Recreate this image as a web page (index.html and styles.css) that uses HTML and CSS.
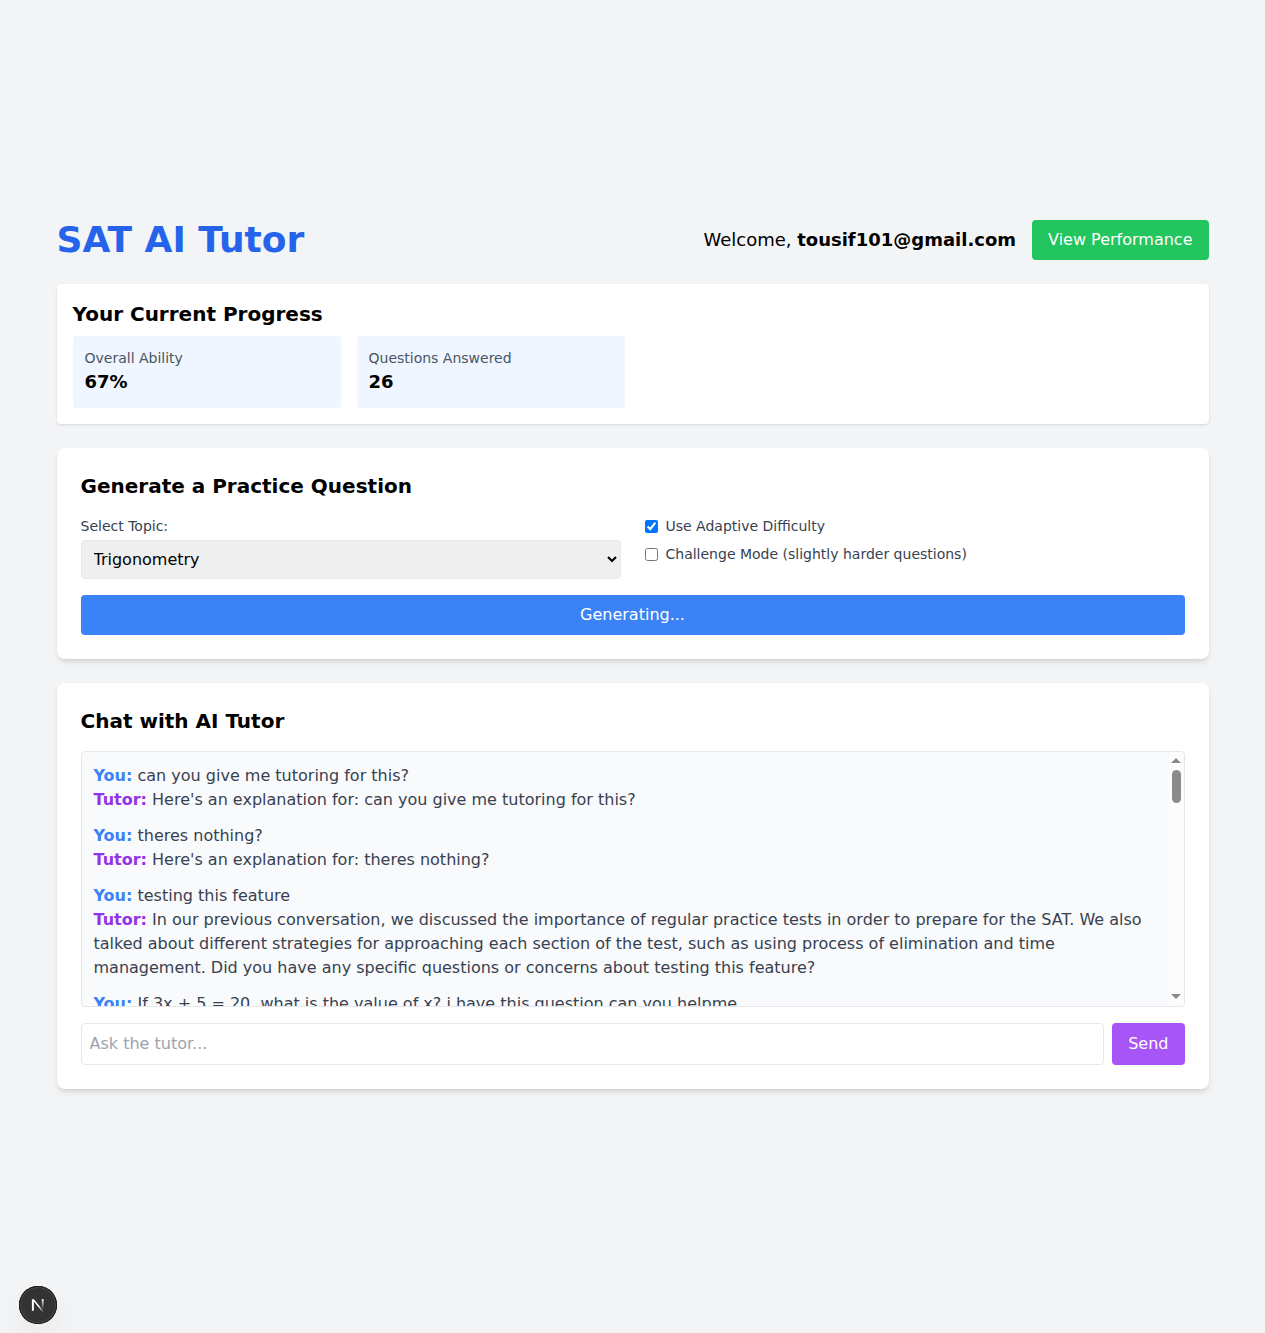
FILE: index.html
```html
<!DOCTYPE html>
<html lang="en">
<head>
<meta charset="utf-8">
<title>SAT AI Tutor</title>
<link rel="stylesheet" href="styles.css">
</head>
<body>
<main class="container">
  <header class="header">
    <h1 class="brand">SAT AI Tutor</h1>
    <div class="account">
      <span class="welcome">Welcome, <strong>tousif101@gmail.com</strong></span>
      <button class="btn btn-green">View Performance</button>
    </div>
  </header>

  <section class="progress">
    <h2 class="section-title">Your Current Progress</h2>
    <div class="stats">
      <div class="stat"><p class="stat-label">Overall Ability</p><p class="stat-value">67%</p></div>
      <div class="stat"><p class="stat-label">Questions Answered</p><p class="stat-value">26</p></div>
    </div>
  </section>

  <section class="card">
    <h2 class="section-title">Generate a Practice Question</h2>
    <div class="form-grid">
      <div>
        <label class="label" for="topic">Select Topic:</label>
        <select class="topic" id="topic"><option>Trigonometry</option></select>
      </div>
      <div class="options">
        <label class="option"><input type="checkbox" checked><span>Use Adaptive Difficulty</span></label>
        <label class="option"><input type="checkbox"><span>Challenge Mode (slightly harder questions)</span></label>
      </div>
    </div>
    <button class="btn btn-blue">Generating...</button>
  </section>

  <section class="card">
    <h2 class="section-title">Chat with AI Tutor</h2>
    <div class="chat">
      <div class="messages">
        <div class="exchange">
          <p><strong class="you">You:</strong> can you give me tutoring for this?</p>
          <p><strong class="tutor">Tutor:</strong> Here's an explanation for: can you give me tutoring for this?</p>
        </div>
        <div class="exchange">
          <p><strong class="you">You:</strong> theres nothing?</p>
          <p><strong class="tutor">Tutor:</strong> Here's an explanation for: theres nothing?</p>
        </div>
        <div class="exchange">
          <p><strong class="you">You:</strong> testing this feature</p>
          <p><strong class="tutor">Tutor:</strong> In our previous conversation, we discussed the importance of regular practice tests in order to prepare for the SAT. We also talked about different strategies for approaching each section of the test, such as using process of elimination and time management. Did you have any specific questions or concerns about testing this feature?</p>
        </div>
        <div class="exchange">
          <p><strong class="you">You:</strong> If 3x + 5 = 20, what is the value of x? i have this question can you helpme</p>
        </div>
      </div>
      <div class="scrollbar">
        <svg width="10" height="5" viewBox="0 0 10 5"><path d="M0 5 5 0 10 5Z" fill="#8b8b8b"/></svg>
        <div class="thumb"></div>
        <svg class="arrow-down" width="10" height="5" viewBox="0 0 10 5"><path d="M0 0h10L5 5Z" fill="#8b8b8b"/></svg>
      </div>
    </div>
    <div class="composer">
      <input class="ask" type="text" placeholder="Ask the tutor...">
      <button class="btn btn-purple">Send</button>
    </div>
  </section>
</main>

<div class="dev-badge">
  <svg width="38" height="38" viewBox="0 0 38 38" fill="none">
    <defs>
      <linearGradient id="stem" x1="0" y1="13" x2="0" y2="23" gradientUnits="userSpaceOnUse"><stop offset="0" stop-color="#fff"/><stop offset="1" stop-color="#fff" stop-opacity="0"/></linearGradient>
      <linearGradient id="diagonal" x1="19.500" y1="20" x2="24" y2="26" gradientUnits="userSpaceOnUse"><stop offset="0" stop-color="#fff"/><stop offset="1" stop-color="#fff" stop-opacity=".1"/></linearGradient>
    </defs>
    <path d="M12.900 24.700V13.200h2L24.700 25.200 23.400 26.200 14.900 15.600v9.100Z" fill="url(#diagonal)"/>
    <path d="M23.700 13v11" stroke="url(#stem)" stroke-width="1.800"/>
  </svg>
</div>
</body>
</html>
```

FILE: styles.css
```css
*, *::before, *::after { box-sizing: border-box; }
h1, h2, p { margin: 0; }
body {
  margin: 0;
  min-height: 100vh;
  display: flex;
  align-items: center;
  justify-content: center;
  background: #f3f4f6;
  color: #000;
  font: 16px/24px "DejaVu Sans", sans-serif;
}
button, input, select { font: inherit; margin: 0; }
.container { width: 1152px; }
.header {
  display: flex;
  align-items: center;
  justify-content: space-between;
  margin-bottom: 24px;
}
.brand { font-size: 36px; line-height: 40px; color: #2563eb; }
.account { display: flex; align-items: center; gap: 16px; }
.welcome { font-size: 18px; line-height: 28px; }
.btn {
  border: 0;
  border-radius: 4px;
  padding: 8px 16px;
  color: #fff;
}
.btn-green { background: #22c55e; }
.btn-blue { display: block; width: 100%; margin-top: 16px; background: #3b82f6; }
.btn-purple { background: #a855f7; }
.section-title { font-size: 20px; line-height: 28px; }
.progress {
  padding: 16px;
  margin-bottom: 24px;
  background: #fff;
  border-radius: 4px;
  box-shadow: 0 1px 3px rgba(0,0,0,.1), 0 1px 2px -1px rgba(0,0,0,.1);
}
.stats {
  display: grid;
  grid-template-columns: repeat(4, 1fr);
  gap: 16px;
  margin-top: 8px;
}
.stat { padding: 12px; border-radius: 4px; background: #eff6ff; }
.stat-label { font-size: 14px; line-height: 20px; color: #4b5563; }
.stat-value { font-size: 18px; line-height: 28px; font-weight: 700; }
.card {
  padding: 24px;
  margin-bottom: 24px;
  background: #fff;
  border-radius: 8px;
  box-shadow: 0 4px 6px -1px rgba(0,0,0,.1), 0 2px 4px -2px rgba(0,0,0,.1);
}
.form-grid {
  display: grid;
  grid-template-columns: 1fr 1fr;
  gap: 24px;
  margin-top: 16px;
}
.label {
  display: block;
  margin-bottom: 4px;
  font-size: 14px;
  line-height: 20px;
  color: #374151;
}
.topic {
  display: block;
  width: 100%;
  height: 39px;
  padding: 8px;
  border: 1px solid #e5e7eb;
  border-radius: 4px;
  background-color: #efefef;
  color: #000;
}
.options { display: flex; flex-direction: column; gap: 8px; }
.option {
  display: flex;
  align-items: center;
  gap: 8px;
  font-size: 14px;
  line-height: 20px;
  color: #374151;
}
.option input { width: 13px; height: 13px; }
.chat {
  display: flex;
  height: 256px;
  margin-top: 16px;
  border: 1px solid #e5e7eb;
  border-radius: 4px;
  background: #f9fafb;
  overflow: hidden;
}
.messages { flex: 1; padding: 12px; overflow: hidden; color: #374151; }
.exchange { margin-bottom: 12px; }
.you { color: #3b82f6; }
.tutor { color: #9333ea; }
.scrollbar {
  display: flex;
  flex-direction: column;
  align-items: center;
  width: 15px;
  padding: 6px 0 7px;
  background: #fcfcfc;
}
.thumb { width: 9px; height: 33px; margin-top: 7px; border-radius: 5px; background: #8b8b8b; }
.arrow-down { margin-top: auto; }
.composer { display: flex; gap: 8px; margin-top: 16px; }
.ask {
  flex: 1;
  height: 42px;
  padding: 7px 8px 9px;
  border: 1px solid #e5e7eb;
  border-radius: 4px;
  background: #fff;
}
.ask::placeholder { color: #9ca3af; }
.dev-badge {
  position: fixed;
  left: 19px;
  bottom: 9px;
  width: 38px;
  height: 38px;
  border-radius: 50%;
  background: #333;
  box-shadow: inset 0 0 0 1px #171717, inset 0 0 0 2px #4a4a4a, 0 16px 32px -8px rgba(0,0,0,.14);
}
```
